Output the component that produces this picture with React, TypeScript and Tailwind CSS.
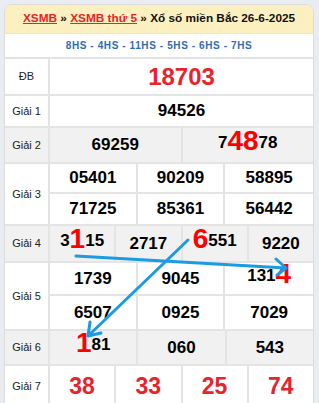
import React from "react";

const red = "text-[#e8232b]";

function Label({ children }: { children: React.ReactNode }) {
  return (
    <div className="w-[45px] shrink-0 flex items-center justify-center border-r-2 border-[#e4e4e4] text-[11px] text-[#222]">
      {children}
    </div>
  );
}

function Cell({ children, className = "" }: { children: React.ReactNode; className?: string }) {
  return (
    <div className={`flex-1 flex items-center justify-center font-bold text-[17px] text-black ${className}`}>
      {children}
    </div>
  );
}

function Big({ children }: { children: React.ReactNode }) {
  return <span className="text-[28px] leading-none text-[#ff0000]">{children}</span>;
}

export default function App() {
  return (
    <div
      className="relative w-[319px] h-[403px] overflow-hidden bg-[#e9ecf0] pt-[4px] pl-[4px]"
      style={{ fontFamily: '"Liberation Sans", Arial, sans-serif' }}
    >
      <div className="w-[310px] bg-white border border-[#dcdcdc] rounded-t-[8px] overflow-hidden">
        {/* tiêu đề */}
        <div className="h-[29px] bg-[#fdf0c0] flex items-center justify-center text-[11.8px] font-bold text-[#111] border-b border-[#e4e4e4] whitespace-pre">
          <a className="text-[#e8232b] underline">XSMB</a>
          <span> » </span>
          <a className="text-[#e8232b] underline">XSMB thứ 5</a>
          <span> » </span>
          <span>Xổ số miền Bắc 26-6-2025</span>
        </div>
        <div className="h-[25px] flex items-center justify-center text-[10px] font-bold tracking-[0.6px] text-[#2f6db3] border-b-2 border-[#e4e4e4]">
          8HS - 4HS - 11HS - 5HS - 6HS - 7HS
        </div>

        {/* ĐB */}
        <div className="h-[37px] flex border-b-2 border-[#e4e4e4]">
          <Label>ĐB</Label>
          <Cell className={`text-[24px] ${red}`}>
            <span className={red}>18703</span>
          </Cell>
        </div>

        {/* Giải 1 */}
        <div className="h-[32px] flex border-b-2 border-[#e4e4e4]">
          <Label>Giải 1</Label>
          <Cell>94526</Cell>
        </div>

        {/* Giải 2 */}
        <div className="h-[36px] flex bg-[#f1f1f1] border-b-2 border-[#e4e4e4]">
          <Label>Giải 2</Label>
          <Cell className="border-r-2 border-[#e4e4e4]">69259</Cell>
          <Cell className="items-end pb-[7px]">
            <span>7</span>
            <Big>48</Big>
            <span>78</span>
          </Cell>
        </div>

        {/* Giải 3 */}
        <div className="h-[62px] flex border-b-2 border-[#e4e4e4]">
          <Label>Giải 3</Label>
          <div className="flex-1 grid grid-cols-3 grid-rows-2">
            {["05401", "90209", "58895", "71725", "85361", "56442"].map((n, i) => (
              <Cell
                key={n}
                className={`${i % 3 !== 2 ? "border-r-2" : ""} ${i < 3 ? "border-b-2" : ""} border-[#e4e4e4]`}
              >
                {n}
              </Cell>
            ))}
          </div>
        </div>

        {/* Giải 4 */}
        <div className="h-[37px] flex bg-[#f1f1f1] border-b-2 border-[#e4e4e4]">
          <Label>Giải 4</Label>
          <Cell className="border-r-2 border-[#e4e4e4] items-end pb-[8px]">
            <span>3</span>
            <Big>1</Big>
            <span>15</span>
          </Cell>
          <Cell className="border-r-2 border-[#e4e4e4]">2717</Cell>
          <Cell className="border-r-2 border-[#e4e4e4] items-end pb-[8px]">
            <Big>6</Big>
            <span>551</span>
          </Cell>
          <Cell>9220</Cell>
        </div>

        {/* Giải 5 */}
        <div className="h-[68px] flex border-b-2 border-[#e4e4e4]">
          <Label>Giải 5</Label>
          <div className="flex-1 grid grid-cols-3 grid-rows-2">
            <Cell className="border-r-2 border-b-2 border-[#e4e4e4]">1739</Cell>
            <Cell className="border-r-2 border-b-2 border-[#e4e4e4]">9045</Cell>
            <Cell className="border-b-2 border-[#e4e4e4] items-end pb-[6px]">
              <span>131</span>
              <Big>4</Big>
            </Cell>
            <Cell className="border-r-2 border-[#e4e4e4]">6507</Cell>
            <Cell className="border-r-2 border-[#e4e4e4]">0925</Cell>
            <Cell>7029</Cell>
          </div>
        </div>

        {/* Giải 6 */}
        <div className="h-[35px] flex bg-[#f1f1f1] border-b-2 border-[#e4e4e4]">
          <Label>Giải 6</Label>
          <Cell className="border-r-2 border-[#e4e4e4] items-end pb-[7px]">
            <Big>1</Big>
            <span>81</span>
          </Cell>
          <Cell className="border-r-2 border-[#e4e4e4]">060</Cell>
          <Cell>543</Cell>
        </div>

        {/* Giải 7 */}
        <div className="h-[40px] flex">
          <Label>Giải 7</Label>
          {["38", "33", "25", "74"].map((n, i) => (
            <Cell key={n} className={`text-[23px] ${red} ${i < 3 ? "border-r-2 border-[#e4e4e4]" : ""}`}>
              <span className={red}>{n}</span>
            </Cell>
          ))}
        </div>
      </div>

      {/* mũi tên */}
      <svg className="absolute inset-0 pointer-events-none" width="319" height="403" viewBox="0 0 319 403">
        <g stroke="#1b9be3" strokeWidth="3" strokeLinecap="round" strokeLinejoin="round" fill="none">
          <path d="M76 256 L286 268 M276 259 L286 268 L277 275" />
          <path d="M188 240 L88 336 M90 322 L88 336 L101 333" />
        </g>
      </svg>
    </div>
  );
}
